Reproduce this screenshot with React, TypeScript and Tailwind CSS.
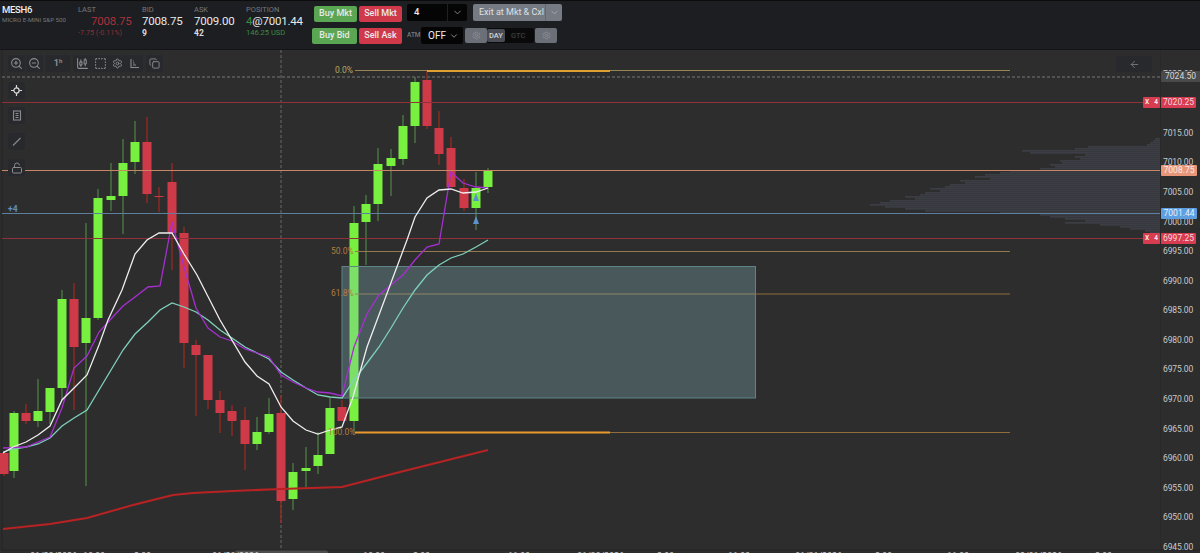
import { ArrowLeft, ChevronDown, CandlestickChart, Copy, LockOpen, Settings, SquareDashed, ZoomIn, ZoomOut } from 'lucide-react';

// x, wick top, body top, body bottom, wick bottom (page pixels), u = green
const candles: [number, number, number, number, number, boolean][] = [
  [4, 452, 453, 474, 476, false],
  [14, 411, 413, 471, 478, true],
  [26, 404, 413, 421, 424, false],
  [38, 379, 411, 421, 427, true],
  [50, 388, 388, 412, 424, true],
  [62, 290, 299, 388, 400, true],
  [74, 283, 299, 347, 410, false],
  [86, 223, 318, 343, 486, true],
  [98, 189, 198, 318, 320, true],
  [111, 163, 196, 200, 211, true],
  [123, 139, 163, 196, 234, true],
  [135, 121, 142, 162, 174, true],
  [147, 117, 142, 194, 203, false],
  [159, 187, 196, 197, 212, false],
  [172, 163, 182, 233, 270, false],
  [184, 227, 233, 343, 368, false],
  [196, 340, 345, 355, 416, false],
  [208, 355, 355, 400, 409, false],
  [220, 391, 400, 413, 433, false],
  [232, 405, 411, 421, 436, false],
  [245, 407, 420, 444, 470, false],
  [257, 417, 432, 444, 450, true],
  [269, 398, 414, 432, 434, true],
  [281, 395, 413, 501, 523, false],
  [293, 463, 472, 499, 510, true],
  [306, 447, 468, 471, 487, true],
  [318, 432, 455, 466, 474, true],
  [330, 398, 408, 454, 454, true],
  [342, 400, 407, 421, 421, false],
  [354, 206, 223, 421, 432, true],
  [366, 195, 204, 222, 265, true],
  [378, 148, 164, 204, 221, true],
  [391, 149, 158, 166, 196, true],
  [403, 115, 126, 159, 165, true],
  [415, 77, 82, 126, 143, true],
  [427, 71, 80, 126, 129, false],
  [439, 111, 128, 154, 165, false],
  [451, 137, 148, 187, 187, false],
  [464, 179, 188, 208, 211, false],
  [476, 172, 188, 208, 230, true],
  [488, 168, 171, 187, 193, true],
];

const whiteLine = '3,453 13,447 26,442 38,435 50,426 62,400 74,388 87,375 99,345 108,320 122,290 135,254 147,240 159,233 172,233 184,254 197,275 220,320 245,362 257,376 269,384 281,407 293,421 306,430 318,434 330,430 342,427 353,397 367,347 392,280 407,240 415,217 427,198 439,190 451,189 463,193 476,192 488,188';
const purpleLine = '3,448 26,447 38,442 50,437 62,408 74,368 87,356 99,332 110,320 123,306 135,297 148,287 160,286 172,222 184,267 196,308 208,328 220,337 232,341 245,349 257,353 269,357 281,375 293,382 306,388 318,392 330,393 342,396 354,347 367,314 379,295 391,285 403,275 415,260 427,247 439,244 451,172 463,183 476,187 488,188';
const tealLine = '3,452 13,449 26,447 38,444 50,438 62,426 74,418 87,410 99,390 111,370 123,350 135,334 148,322 160,310 172,303 184,307 196,312 208,320 220,330 232,338 245,347 257,353 269,359 281,372 293,380 306,388 318,395 330,397 342,398 354,380 367,363 379,347 391,328 403,308 415,290 427,275 439,265 451,258 463,254 476,247 488,240';
const redLine = '3,529 50,524 87,518 133,505 173,495 193,493 233,491 281,489 342,487 400,472 440,462 488,450';

// left edge of each volume bar, 2px apart starting at y=138
const profile = [1155, 1153, 1150, 1147, 1088, 1075, 1022, 1030, 1085, 1075, 1080, 1060, 1062, 1050, 1055, 1040, 1010, 1000, 985, 975, 990, 960, 965, 950, 945, 930, 940, 925, 920, 905, 915, 890, 880, 870, 885, 905, 925, 1000, 1040, 1050, 1065, 1085, 1065, 1100, 1120, 1130, 1145, 1150];

const ticks: [string, number][] = [
  ['7025.00', 74], ['7015.00', 133], ['7010.00', 162], ['7005.00', 192], ['7000.00', 222], ['6995.00', 251],
  ['6990.00', 281], ['6985.00', 310], ['6980.00', 340], ['6975.00', 369], ['6970.00', 399], ['6965.00', 429],
  ['6960.00', 458], ['6955.00', 488], ['6950.00', 517], ['6945.00', 547],
];

const times: [string, number][] = [
  ['01/28/2026', 30], ['10:00', 83], ['2:00', 134], ['01/29/2026', 212], ['10:00', 363], ['2:00', 413], ['11:00', 508],
  ['01/30/2026', 577], ['2:00', 657], ['11:00', 728], ['01/31/2026', 795], ['2:00', 875], ['11:00', 947], ['02/01/2026', 1015], ['2:00', 1095],
];

function Chart() {
  return (
    <svg viewBox="0 50 1200 503" className="block h-[503px] w-[1200px]">
      <rect x="2" y="50" width="1198" height="500" fill="#2e2d2e" />
      <line x1="2" y1="50" x2="2" y2="550" stroke="#242425" />
      <line x1="2" y1="550" x2="1200" y2="550" stroke="#232324" />
      <line x1="1160.5" y1="50" x2="1160.5" y2="550" stroke="#2a292a" />

      {profile.map((left, i) => (
        <rect key={i} x={left} y={138 + i * 2} width={1160 - left} height="1.7" fill="#3b3e45" />
      ))}

      <line x1="2" y1="77" x2="1160" y2="77" stroke="#8c8c8c" strokeDasharray="3 2" strokeWidth="0.8" />
      <line x1="281" y1="50" x2="281" y2="550" stroke="#6a6a6a" strokeDasharray="3 2" />

      {candles.map(([x, wt, bt, bb, wb, up]) => (
        <g key={x}>
          <line x1={x} y1={wt} x2={x} y2={wb} stroke={up ? '#4c7f41' : '#9a2a1f'} strokeWidth="1.3" />
          <rect x={x - 4.5} y={bt} width="9" height={Math.max(bb - bt, 1)} fill={up ? '#78f03f' : '#cf3a49'} />
        </g>
      ))}

      <line x1="2" y1="102.5" x2="1160" y2="102.5" stroke="#8f3139" />
      <line x1="2" y1="170.5" x2="1160" y2="170.5" stroke="#c88568" />
      <line x1="2" y1="213.5" x2="1160" y2="213.5" stroke="#5d7f9f" />
      <line x1="2" y1="238.5" x2="1160" y2="238.5" stroke="#8f3139" />

      <line x1="355" y1="70.5" x2="1010" y2="70.5" stroke="#978553" />
      <line x1="427" y1="71" x2="610" y2="71" stroke="#e0a02f" strokeWidth="2" />
      <line x1="355" y1="251.5" x2="1010" y2="251.5" stroke="#94794f" />
      <line x1="355" y1="294" x2="1010" y2="294" stroke="#8e6f3c" />
      <line x1="610" y1="432.5" x2="1010" y2="432.5" stroke="#8e6f3c" />
      <line x1="355" y1="432.5" x2="610" y2="432.5" stroke="#e9992a" strokeWidth="2" />

      <rect x="342" y="266.5" width="413.5" height="131.5" fill="#87bcc3" fillOpacity="0.31" stroke="#5f8486" />

      <polyline points={tealLine} fill="none" stroke="#7fd1bd" strokeWidth="1.3" />
      <polyline points={purpleLine} fill="none" stroke="#a52fd0" strokeWidth="1.3" />
      <polyline points={whiteLine} fill="none" stroke="#eeeeee" strokeWidth="1.3" />
      <polyline points={redLine} fill="none" stroke="#b92222" strokeWidth="2" />

      <polygon points="476,193 479,201 473,201" fill="#5b93cf" />
      <polygon points="476,216 479,224 473,224" fill="#5b93cf" />

      <g fontFamily="Roboto, sans-serif" fontSize="8.5">
        <text x="335" y="73" fill="#b9a560">0.0%</text>
        <text x="331" y="254" fill="#b27c3e">50.0%</text>
        <text x="331" y="296" fill="#b27c3e">61.8%</text>
        <text x="328" y="435" fill="#b27c3e">100.0%</text>
        <text x="8" y="212" fill="#5d8fc4" fontWeight="700">+4</text>
      </g>

      <g fontFamily="Roboto, sans-serif" fontSize="8.5" letterSpacing="-0.1" fill="#c9c9c9">
        {ticks.map(([label, y]) => (
          <text key={label} x="1163" y={y + 3}>{label}</text>
        ))}
        <rect x="235" y="550.5" width="93" height="4" rx="2" fill="#4d4d4e" />
        {times.map(([label, x]) => (
          <text key={label + x} x={x} y="558.5" fontSize="9">{label}</text>
        ))}
      </g>
    </svg>
  );
}

function Stat({ label, value, sub, valueClass, subClass, className }: { label: string; value: React.ReactNode; sub: string; valueClass?: string; subClass?: string; className?: string }) {
  return (
    <div className={className}>
      <div className="text-[7.5px] leading-[8px] text-[#77797d]">{label}</div>
      <div className={`whitespace-nowrap text-[11.5px] leading-[14px] tracking-[-0.2px] ${valueClass ?? 'text-[#e8e8e8]'}`}>{value}</div>
      <div className={`whitespace-nowrap leading-[10px] ${subClass ?? 'text-[8.5px] font-bold text-[#dcdcdc]'}`}>{sub}</div>
    </div>
  );
}

function OrderButton({ label, buy, className }: { label: string; buy?: boolean; className?: string }) {
  return (
    <div className={`flex h-[16px] items-center justify-center rounded-[2px] text-[9px] font-medium text-[#e9e9e9] ${buy ? 'bg-[#5aa652]' : 'bg-[#d0394a]'} ${className ?? ''}`}>
      {label}
    </div>
  );
}

function Header() {
  return (
    <div className="flex h-[50px] border-b border-b-[#141516] border-t border-t-[#0c0c0d] bg-[#1c1e21] font-['Roboto',sans-serif]">
      <div className="w-[78px] pl-[2px] pt-[2px]">
        <div className="text-[9.5px] font-medium leading-[13px] tracking-[-0.3px] text-[#efefef]">MESH6</div>
        <div className="whitespace-nowrap text-[6.2px] leading-[9px] text-[#77797d]">MICRO E-MINI S&amp;P 500</div>
      </div>
      <div className="flex pt-[5px]">
        <Stat className="w-[64px]" label="LAST" value="7008.75" valueClass="pl-[13px] text-[#a8323d]" sub="-7.75 (-0.11%)" subClass="text-[7.2px] text-[#8a2f38]" />
        <Stat className="w-[52px]" label="BID" value="7008.75" sub="9" />
        <Stat className="w-[52px]" label="ASK" value="7009.00" sub="42" />
        <Stat
          className="w-[66px]"
          label="POSITION"
          value={<><span className="text-[#3f8a45]">4</span>@7001.44</>}
          sub="146.25 USD"
          subClass="text-[7.5px] text-[#3f8a45]"
        />
      </div>
      <div className="flex flex-col gap-[5px] pt-[5px]">
        <div className="flex items-start">
          <OrderButton label="Buy Mkt" buy className="ml-[2px] mr-[2px] w-[43px]" />
          <OrderButton label="Sell Mkt" className="w-[43px]" />
          <div className="ml-[5px] mt-[-2px] flex h-[17px] w-[60px] items-center rounded-[2px] bg-[#050505] text-[9.5px] font-medium text-[#e9e9e9]">
            <span className="flex-1 pl-[7px]">4</span>
            <span className="flex h-full w-[20px] items-center justify-center border-l border-l-[#1f2023]">
              <ChevronDown size={11} className="text-[#8a8a8a]" />
            </span>
          </div>
          <div className="ml-[6px] mt-[-2px] flex h-[17px] w-[89px] items-center rounded-[2px] bg-[#757a83] text-[9px] text-[#dfe0e2]">
            <span className="flex-1 whitespace-nowrap pl-[6px]">Exit at Mkt &amp; Cxl</span>
            <span className="flex h-full w-[17px] items-center justify-center border-l border-l-[#65696f]">
              <ChevronDown size={11} className="text-[#a6a9af]" />
            </span>
          </div>
        </div>
        <div className="flex items-center">
          <OrderButton label="Buy Bid" buy className="mr-[2px] w-[45px]" />
          <OrderButton label="Sell Ask" className="w-[43px]" />
          <span className="ml-[5px] w-[14px] text-[6.5px] font-medium text-[#77797d]">ATM</span>
          <div className="flex h-[17px] w-[42px] items-center rounded-[2px] bg-[#050505] text-[10px] text-[#eeeeee]">
            <span className="flex-1 pl-[7px]">OFF</span>
            <ChevronDown size={10} className="mr-[4px] text-[#a0a0a0]" />
          </div>
          <div className="ml-[2px] flex h-[15px] w-[22px] items-center justify-center rounded-[2px] bg-[#6b6f77]">
            <Settings size={9} className="text-[#8f9298]" />
          </div>
          <div className="flex h-[15px] w-[47px] items-center rounded-[2px] bg-[#0a0a0b] text-[7.5px] font-medium">
            <span className="rounded-[2px] bg-[#4a4d55] px-[2px] py-[2px] leading-[9px] text-[#d4d5d7]">DAY</span>
            <span className="pl-[6px] text-[#3c3e42]">GTC</span>
          </div>
          <div className="ml-[1px] flex h-[15px] w-[22px] items-center justify-center rounded-[2px] bg-[#6b6f77]">
            <Settings size={9} className="text-[#8f9298]" />
          </div>
        </div>
      </div>
    </div>
  );
}

function ToolButton({ children, className }: { children: React.ReactNode; className?: string }) {
  return <div className={`flex h-[17px] w-[17px] items-center justify-center rounded-[2px] bg-[#28292c] text-[#8b8c8f] ${className ?? ''}`}>{children}</div>;
}

function Toolbars() {
  return (
    <>
      <div className="absolute left-[8px] top-[5px] flex items-center gap-[3px] font-['Roboto',sans-serif]">
        <div className="flex gap-[1px]">
          <ToolButton><ZoomIn size={13} /></ToolButton>
          <ToolButton><ZoomOut size={13} /></ToolButton>
        </div>
        <ToolButton className="w-[24px] text-[9px] font-bold">1<sup className="text-[6px]">h</sup></ToolButton>
        <div className="flex">
          <ToolButton className="w-[18px]"><CandlestickChart size={13} /></ToolButton>
          <ToolButton className="w-[18px]"><SquareDashed size={13} /></ToolButton>
          <ToolButton className="w-[17px]"><Settings size={11} /></ToolButton>
          <ToolButton className="w-[17px]">
            <svg width="11" height="11" viewBox="0 0 11 11" fill="none" stroke="currentColor" strokeWidth="1.1">
              <path d="M2 1v8.5h8" />
              <path d="M4 7h3M4 5h1.5M4 3h.8" />
            </svg>
          </ToolButton>
        </div>
        <ToolButton><Copy size={11} /></ToolButton>
      </div>

      <div className="absolute left-[8px] top-[32px] flex flex-col gap-[9px]">
        <ToolButton className="mb-[-1px] text-[#d8d8d8]">
          <svg width="11" height="11" viewBox="0 0 11 11" fill="none" stroke="currentColor" strokeWidth="1.2">
            <circle cx="5.5" cy="5.5" r="2.6" />
            <path d="M5.5 0v3M5.5 8v3M0 5.5h3M8 5.5h3" />
          </svg>
        </ToolButton>
        <ToolButton>
          <svg width="10" height="11" viewBox="0 0 10 11" fill="none" stroke="currentColor" strokeWidth="1.1">
            <rect x="1.5" y="1" width="7" height="9" />
            <path d="M3.5 3.5h3M3.5 5.5h3M3.5 7.5h3" />
          </svg>
        </ToolButton>
        <ToolButton>
          <svg width="11" height="11" viewBox="0 0 11 11" fill="none" stroke="currentColor" strokeWidth="1.1">
            <path d="M2 9.5L9.5 2" />
          </svg>
        </ToolButton>
        <ToolButton><LockOpen size={12} /></ToolButton>
      </div>

      <div className="absolute left-[1116px] top-[6px] flex h-[16px] w-[36px] items-center justify-center rounded-[2px] bg-[#28292c] text-[#77787b]">
        <ArrowLeft size={11} />
      </div>
    </>
  );
}

const badge = "absolute left-[1161px] flex h-[11px] items-center justify-center rounded-[1px] text-[8.5px] leading-none";
const orderTag = "absolute left-[1143px] flex h-[11px] w-[17px] items-center justify-center gap-[5px] rounded-[1px] bg-[#d83c50] text-[6.5px] font-bold text-[#f3e4e6]";

function PriceBadges() {
  return (
    <div className="font-['Roboto',sans-serif]">
      <div className={`${badge} top-[21px] w-[39px] bg-[#4a4a4b] text-[#d8d8d8]`}>7024.50</div>
      <div className={`${badge} top-[47px] w-[35px] bg-[#d83c50] text-[#f3d8dc]`}>7020.25</div>
      <div className={`${orderTag} top-[47px]`}><span>X</span><span>4</span></div>
      <div className={`${badge} top-[115px] w-[36px] bg-[#e8967a] text-[#f8ece6]`}>7008.75</div>
      <div className={`${badge} top-[158px] w-[36px] bg-[#5d9fe0] text-[#e7f0fa]`}>7001.44</div>
      <div className={`${badge} top-[183px] w-[35px] bg-[#d83c50] text-[#f3d8dc]`}>6997.25</div>
      <div className={`${orderTag} top-[183px]`}><span>X</span><span>4</span></div>
    </div>
  );
}

export default function App() {
  return (
    <div className="h-[553px] w-[1200px] overflow-hidden bg-[#2e2d2e]">
      <Header />
      <div className="relative">
        <Chart />
        <Toolbars />
        <PriceBadges />
      </div>
    </div>
  );
}
